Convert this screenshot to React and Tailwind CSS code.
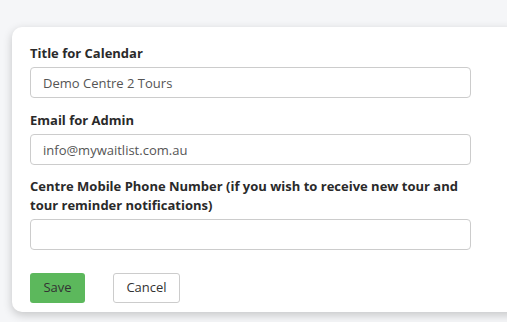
import React, { useState } from "react";

export default function App() {
  const [form, setForm] = useState({
    title: "Demo Centre 2 Tours",
    email: "info@mywaitlist.com.au",
    phone: "",
  });

  const handleChange = (e) => {
    setForm({ ...form, [e.target.id]: e.target.value });
  };

  const inputClass =
    "block w-[441px] h-[31px] rounded-[4px] border border-[#cccccc] bg-white px-3 text-[13px] text-[#555555] focus:outline-none";

  return (
    <div
      className="min-h-[322px] w-[507px] overflow-hidden bg-[#f5f6f8] pt-[27px] pl-[12px]"
      style={{ fontFamily: '"Open Sans", "Liberation Sans", sans-serif' }}
    >
      <div className="w-[540px] rounded-[10px] bg-white pt-[17px] pb-[9px] pl-[18px] shadow-[0_3px_10px_rgba(0,0,0,0.2)]">
        <label htmlFor="title" className="block text-[13px] leading-[19px] font-bold text-[#2a2a2a] mb-[4px]">
          Title for Calendar
        </label>
        <input id="title" value={form.title} onChange={handleChange} className={inputClass} />

        <label htmlFor="email" className="block mt-[13px] text-[13px] leading-[19px] font-bold text-[#2a2a2a] mb-[4px]">
          Email for Admin
        </label>
        <input id="email" value={form.email} onChange={handleChange} className={inputClass} />

        <label htmlFor="phone" className="block mt-[12px] w-[441px] text-[13px] leading-[19px] font-bold text-[#2a2a2a] mb-[4px]">
          Centre Mobile Phone Number (if you wish to receive new tour and tour reminder notifications)
        </label>
        <input id="phone" value={form.phone} onChange={handleChange} className={inputClass} />

        <div className="mt-[23px] flex gap-[28px]">
          <button className="h-[30px] w-[55px] rounded-[3px] bg-[#5cb85c] text-[13px] text-[#333333]">
            Save
          </button>
          <button className="h-[30px] w-[67px] rounded-[3px] border border-[#cccccc] bg-white text-[13px] text-[#333333]">
            Cancel
          </button>
        </div>
      </div>
    </div>
  );
}
